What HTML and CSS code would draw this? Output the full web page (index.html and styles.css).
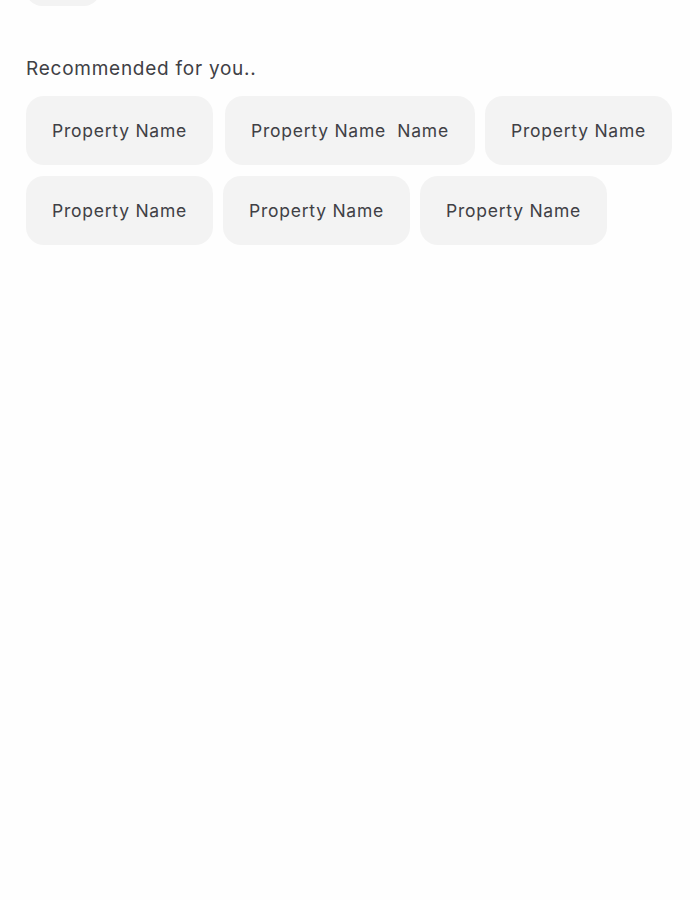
FILE: index.html
```html
<!DOCTYPE html>
<html>
<head>
<meta charset="utf-8">
<link rel="stylesheet" href="styles.css">
</head>
<body>
<div class="page">
  <div class="top-chip"></div>
  <h2 class="heading">Recommended for you..</h2>
  <div class="chips">
    <div class="chip">Property Name</div>
    <div class="chip chip-wide">Property Name  Name</div>
    <div class="chip">Property Name</div>
    <div class="chip">Property Name</div>
    <div class="chip">Property Name</div>
    <div class="chip">Property Name</div>
  </div>
</div>
</body>
</html>
```
FILE: styles.css
```css
html, body {
  margin: 0;
  padding: 0;
  background: #fefefe;
}
.page {
  padding: 0 0 0 26px;
  font-family: "Inter", "Noto Sans", sans-serif;
  color: #404045;
}
.top-chip {
  width: 74px;
  height: 40px;
  margin-top: -34px;
  background: #f3f3f3;
  border-radius: 16px;
}
.heading {
  margin: 51px 0 0 0;
  font-size: 19px;
  font-weight: 400;
  line-height: 24px;
  letter-spacing: 0.75px;
}
.chips {
  display: flex;
  flex-wrap: wrap;
  gap: 11px 10px;
  margin-top: 15px;
  width: 660px;
}
.chip {
  display: flex;
  align-items: center;
  justify-content: center;
  height: 69px;
  padding: 0 20px;
  box-sizing: border-box;
  width: 187px;
  background: #f3f3f3;
  border-radius: 18px;
  font-size: 17.5px;
  letter-spacing: 0.75px;
  white-space: pre;
  color: #404045;
}
.chip-wide {
  width: 250px;
  margin-left: 2px;
}
```
